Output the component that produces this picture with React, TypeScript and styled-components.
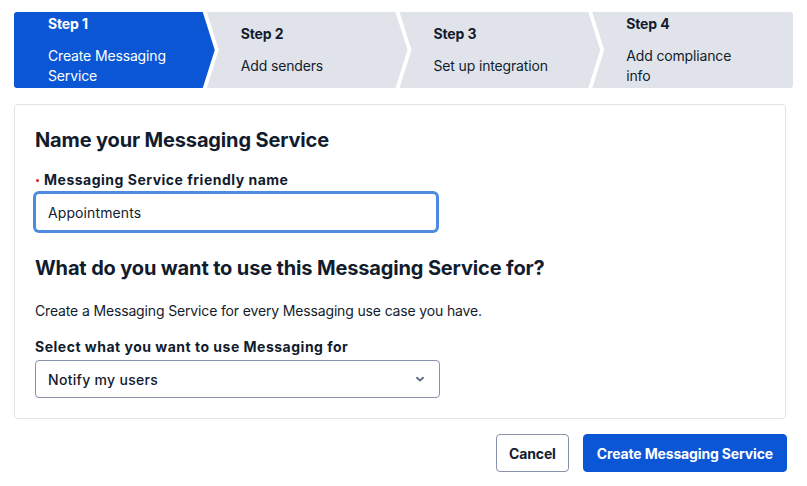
import React from 'react';
import styled, { createGlobalStyle, css } from 'styled-components';

const GlobalStyle = createGlobalStyle`
  body {
    margin: 0;
    font-family: Inter, "Noto Sans", sans-serif;
    letter-spacing: -0.15px;
    color: #121c2d;
    background: #ffffff;
  }
  * { box-sizing: border-box; }
`;

const Page = styled.div`
  padding: 12px 14px 0 14px;
`;

const Stepper = styled.ol`
  display: flex;
  margin: 0;
  padding: 0;
  list-style: none;
  height: 76px;
`;

type StepPos = 'first' | 'middle' | 'last';

const clipFor = (pos: StepPos) => {
  if (pos === 'first') {
    return 'polygon(0 0, calc(100% - 12px) 0, 100% 50%, calc(100% - 12px) 100%, 0 100%)';
  }
  if (pos === 'last') {
    return 'polygon(0 0, 100% 0, 100% 100%, 0 100%, 12px 50%)';
  }
  return 'polygon(0 0, calc(100% - 12px) 0, 100% 50%, calc(100% - 12px) 100%, 0 100%, 12px 50%)';
};

const Step = styled.li<{ $active?: boolean; $pos: StepPos }>`
  flex: 1;
  display: flex;
  flex-direction: column;
  justify-content: center;
  padding-left: 34px;
  background: ${({ $active }) => ($active ? '#0a56d5' : '#e1e3ea')};
  color: ${({ $active }) => ($active ? '#ffffff' : '#121c2d')};
  clip-path: ${({ $pos }) => clipFor($pos)};
  ${({ $pos }) => $pos !== 'first' && css`margin-left: -8px;`}
  ${({ $pos }) => $pos === 'first' && css`border-radius: 3px 0 0 3px;`}
  ${({ $pos }) => $pos === 'last' && css`border-radius: 0 3px 3px 0;`}
`;

const StepTitle = styled.span`
  font-size: 14px;
  line-height: 20px;
  font-weight: 700;
  margin-bottom: 12px;
`;

const StepText = styled.span`
  font-size: 14px;
  line-height: 20px;
  max-width: 124px;
`;

const Card = styled.section`
  margin: 16px 7px 0 0;
  border: 1px solid #e1e3ea;
  border-radius: 4px;
  padding: 21px 20px 20px;
  display: flex;
  flex-direction: column;
`;

const Heading = styled.h2<{ $spaced?: boolean }>`
  margin: ${({ $spaced }) => ($spaced ? '23px 0 19px' : '0 0 16px')};
  font-size: 20px;
  line-height: 28px;
  font-weight: 700;
  color: #121c2d;
`;

const Label = styled.label`
  display: flex;
  align-items: center;
  gap: 5px;
  font-size: 14px;
  line-height: 20px;
  font-weight: 700;
  letter-spacing: 0.5px;
  margin-bottom: 3px;
`;

const RequiredDot = styled.span`
  width: 3px;
  height: 3px;
  margin-left: 1px;
  border-radius: 50%;
  background: #d61f1f;
`;

const TextInput = styled.input`
  width: 402px;
  height: 38px;
  padding: 0 12px;
  border: 1px solid #4d8ae0;
  border-radius: 4px;
  box-shadow: 0 0 0 2px #4d8ae0;
  font-family: inherit;
  font-size: 14px;
  letter-spacing: 0.1px;
  color: #121c2d;
  outline: none;
`;

const Help = styled.p`
  margin: 0 0 16px;
  font-size: 14px;
  line-height: 20px;
`;

const SelectBox = styled.div`
  width: 405px;
  height: 38px;
  display: flex;
  align-items: center;
  justify-content: space-between;
  padding: 0 14px 0 12px;
  border: 1px solid #8891aa;
  border-radius: 4px;
  font-size: 14px;
  font-weight: 500;
  letter-spacing: 0.3px;
`;

const Actions = styled.div`
  display: flex;
  justify-content: flex-end;
  gap: 14px;
  margin: 15px 6px 0 0;
`;

const Button = styled.button<{ $primary?: boolean }>`
  height: 38px;
  padding: 0 ${({ $primary }) => ($primary ? '13px' : '12px')};
  border-radius: 4px;
  font-family: inherit;
  font-size: 14px;
  font-weight: 700;
  letter-spacing: inherit;
  border: 1px solid ${({ $primary }) => ($primary ? '#0a56d5' : '#8891aa')};
  background: ${({ $primary }) => ($primary ? '#0a56d5' : '#ffffff')};
  color: ${({ $primary }) => ($primary ? '#ffffff' : '#121c2d')};
`;

const Chevron = () => (
  <svg width="10" height="10" viewBox="0 0 10 10" fill="none">
    <path d="M2 3.8l3 2.8 3-2.8" stroke="#606b85" strokeWidth="1.9" strokeLinecap="round" strokeLinejoin="round" />
  </svg>
);

const steps = [
  { title: 'Step 1', text: 'Create Messaging Service' },
  { title: 'Step 2', text: 'Add senders' },
  { title: 'Step 3', text: 'Set up integration' },
  { title: 'Step 4', text: 'Add compliance info' },
];

const App = () => {
  return (
    <Page>
      <GlobalStyle />
      <Stepper>
        {steps.map((step, i) => (
          <Step
            key={step.title}
            $active={i === 0}
            $pos={i === 0 ? 'first' : i === steps.length - 1 ? 'last' : 'middle'}
          >
            <StepTitle>{step.title}</StepTitle>
            <StepText>{step.text}</StepText>
          </Step>
        ))}
      </Stepper>

      <Card>
        <Heading>Name your Messaging Service</Heading>
        <Label htmlFor="friendly-name">
          <RequiredDot />
          Messaging Service friendly name
        </Label>
        <TextInput id="friendly-name" defaultValue="Appointments" />

        <Heading $spaced>What do you want to use this Messaging Service for?</Heading>
        <Help>Create a Messaging Service for every Messaging use case you have.</Help>
        <Label>Select what you want to use Messaging for</Label>
        <SelectBox>
          Notify my users
          <Chevron />
        </SelectBox>
      </Card>

      <Actions>
        <Button>Cancel</Button>
        <Button $primary>Create Messaging Service</Button>
      </Actions>
    </Page>
  );
};

export default App;
